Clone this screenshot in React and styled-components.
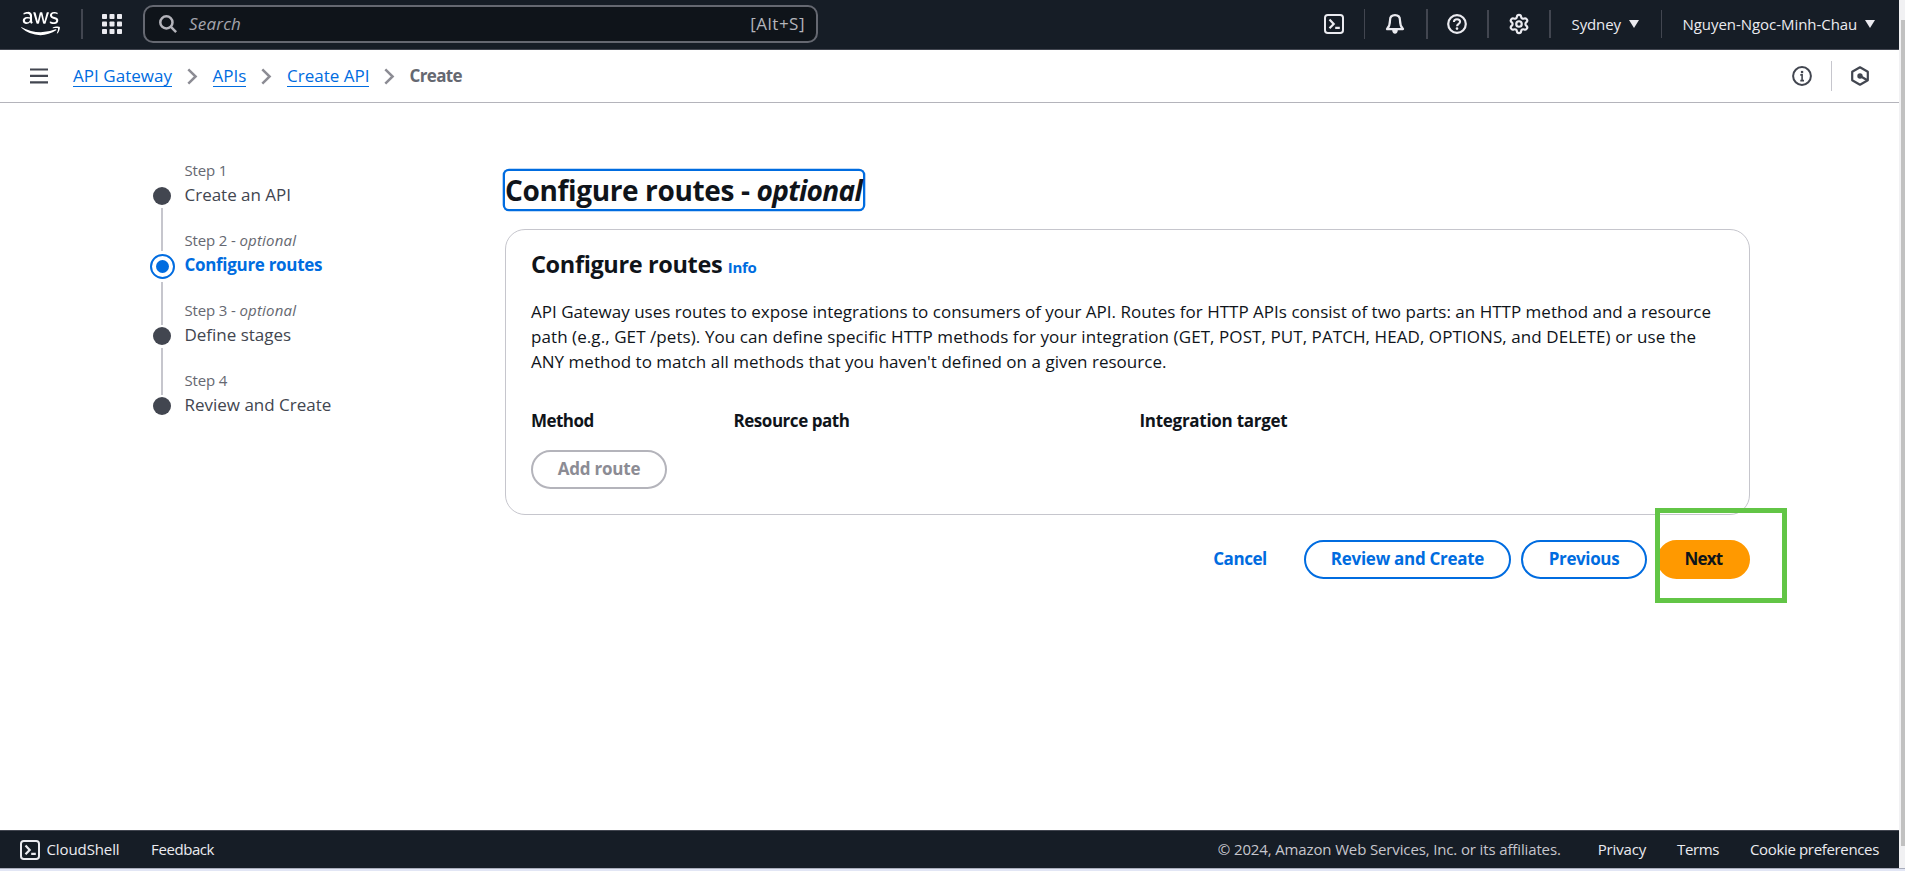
import React from "react";
import styled, { createGlobalStyle, css } from "styled-components";
import { FaAws } from "react-icons/fa";
import { Settings } from "lucide-react";

const GlobalStyle = createGlobalStyle`
  *, *::before, *::after { box-sizing: border-box; }
  body {
    margin: 0;
    overflow: hidden;
    background: #fff;
    color: #0f141a;
    font-family: "Open Sans", "Noto Sans", sans-serif;
    font-size: 17px;
  }
  h1, h2, p, ol, ul { margin: 0; padding: 0; }
  li { list-style: none; }
  svg { display: block; flex: none; }
`;

const Window = styled.div`
  display: flex;
  flex-direction: column;
  width: 1905px;
  height: 871px;
`;

const Viewport = styled.div`
  display: flex;
  flex: 1;
  min-height: 0;
`;

const Page = styled.div`
  display: flex;
  flex-direction: column;
  width: 1899px;
`;

const ScrollTrack = styled.div`
  width: 6px;
  padding: 20px 0 22px 2px;
  background: #f1f1f3;
`;

const ScrollThumb = styled.div`
  height: 100%;
  background: #c1c1c1;
`;

const WindowEdge = styled.div`
  height: 3px;
  border-top: 1px solid #a9adbb;
  background: #e2e6f5;
`;

const Label = styled.span`
  white-space: nowrap;
  letter-spacing: ${(p) => p.$track || 0}px;
`;

/* Top navigation */

const TopBar = styled.header`
  display: flex;
  align-items: flex-start;
  height: 50px;
  padding-left: 21px;
  border-bottom: 1px solid #424650;
  background: #161d26;
  color: #ebebf0;
`;

const LogoLink = styled.a`
  display: flex;
  width: 39px;
  margin: 8px 21px 0 0;
  color: #fff;

  svg { width: 39px; height: 31px; }
`;

const NavDivider = styled.i`
  width: ${(p) => (p.$thin ? 1 : 2)}px;
  height: ${(p) => (p.$short ? 28 : 30)}px;
  margin-top: ${(p) => (p.$short ? 10 : 9)}px;
  background: #424650;
`;

const NavButton = styled.a`
  display: flex;
  align-items: center;
  justify-content: center;
  width: ${(p) => p.$width}px;
  height: 48px;
  padding-right: ${(p) => p.$end || 0}px;
`;

const SearchBox = styled.div`
  display: flex;
  align-items: center;
  width: 675px;
  height: 38px;
  margin: 5px 506px 0 1px;
  padding: 0 11px 0 14px;
  border: 2px solid #656871;
  border-radius: 10px;
  background: #0f141a;
  color: #b4b4bb;
`;

const SearchText = styled.span`
  flex: 1;
  margin: -2px 0 0 12px;
  font-style: italic;
  color: #a4a4ad;
  letter-spacing: 0.2px;
`;

const Shortcut = styled.span`
  margin-top: -2px;
  letter-spacing: 0.5px;
`;

const NavMenu = styled.a`
  display: flex;
  align-items: center;
  gap: 8px;
  height: 48px;
  padding-left: 20.5px;
  width: ${(p) => p.$width}px;
  font-size: 15px;
  line-height: 20px;
`;

/* Breadcrumb row */

const CrumbBar = styled.nav`
  display: flex;
  align-items: center;
  height: 53px;
  padding: 0 30px;
  border-bottom: 1px solid #b4b4bb;
  color: #424650;
`;

const Crumbs = styled.ol`
  display: flex;
  align-items: center;
  flex: 1;
  margin-left: 25px;
`;

const Crumb = styled.li`
  display: flex;
  align-items: center;
  gap: 15px;
  width: ${(p) => p.$width}px;
`;

const CrumbLink = styled.a`
  height: 22px;
  line-height: 22px;
  border-bottom: 1px solid #006ce0;
  color: #006ce0;
  white-space: nowrap;
  letter-spacing: ${(p) => p.$track || 0}px;
`;

const CurrentCrumb = styled.span`
  line-height: 24px;
  font-weight: 700;
  color: #656871;
  letter-spacing: -0.65px;
`;

const BarDivider = styled.i`
  width: 1px;
  height: 30px;
  margin: 0 19px;
  background: #c6c6cd;
`;

/* Content */

const Content = styled.main`
  display: flex;
  flex: 1;
  padding: 57px 0 0 149px;
`;

const StepList = styled.ol`
  width: 356px;
`;

const Step = styled.li`
  display: flex;
  gap: 9.5px;
  height: 70px;
`;

const Rail = styled.div`
  display: flex;
  flex-direction: column;
  align-items: center;
  gap: 3px;
  width: 26px;
  padding-top: ${(p) => (p.$active ? 24 : 27)}px;
`;

const Dot = styled.i`
  flex: none;
  width: 18px;
  height: 18px;
  border-radius: 50%;
  background: #424650;
  ${(p) =>
    p.$active &&
    css`
      width: 25px;
      height: 25px;
      border: 2px solid #006ce0;
      padding: 4px;
      background: #006ce0 content-box;
    `}
`;

const Connector = styled.i`
  flex: none;
  width: 2px;
  height: ${(p) => p.$length}px;
  background: #c6c6cd;
`;

const StepText = styled.div`
  display: flex;
  flex-direction: column;
  gap: 2px;
`;

const StepNumber = styled.span`
  line-height: 20px;
  font-size: 15px;
  color: #656871;
  white-space: nowrap;
  letter-spacing: -0.15px;

  em { letter-spacing: 0.2px; }
`;

const StepTitle = styled.span`
  line-height: 25px;
  color: ${(p) => (p.$active ? "#006ce0" : "#424650")};
  font-weight: ${(p) => (p.$active ? 700 : 400)};
  letter-spacing: ${(p) => (p.$active ? -0.31 : -0.01)}px;
  white-space: nowrap;
`;

const Main = styled.section`
  width: 1245px;
  padding-top: 11px;
`;

const PageTitle = styled.h1`
  width: 358px;
  height: 38px;
  border-radius: 4px;
  box-shadow: 0 0 0 2.3px #006ce0;
  font-size: 28px;
  line-height: 39px;
  font-weight: 700;
  letter-spacing: -0.36px;
  white-space: nowrap;

  em { letter-spacing: -0.7px; }
`;

const Card = styled.section`
  height: 286px;
  margin-top: 20px;
  padding: 19px 25px;
  border: 1px solid #c6c6cd;
  border-radius: 20px;
`;

const CardHeader = styled.div`
  display: flex;
  align-items: baseline;
  gap: 5.5px;
`;

const CardTitle = styled.h2`
  font-size: 23.5px;
  line-height: 30px;
  letter-spacing: -0.36px;
`;

const InfoLink = styled.a`
  font-size: 15px;
  font-weight: 700;
  color: #006ce0;
  letter-spacing: -0.3px;
`;

const Description = styled.p`
  margin-top: 20px;
  line-height: 25px;
`;

const DescriptionLine = styled.span`
  display: block;
  white-space: nowrap;
  letter-spacing: ${(p) => p.$track}px;
`;

const Columns = styled.div`
  display: grid;
  grid-template-columns: 202.5px 406px 1fr;
  margin: 34px 0 17px;
  line-height: 25px;
  font-weight: 700;
`;

const Button = styled.button`
  width: ${(p) => p.$width}px;
  height: 39px;
  padding: 0 0 2px;
  border: 2px solid #006ce0;
  border-radius: 20px;
  background: #fff;
  color: #006ce0;
  font: 700 17px "Open Sans", "Noto Sans", sans-serif;
  letter-spacing: ${(p) => p.$track || 0}px;
  white-space: nowrap;

  ${(p) =>
    p.$kind === "disabled" &&
    css`
      border-color: #b4b4bb;
      color: #8c8c94;
    `}
  ${(p) =>
    p.$kind === "primary" &&
    css`
      border-color: #ff9900;
      background: #ff9900;
      color: #0f141a;
    `}
  ${(p) =>
    p.$kind === "link" &&
    css`
      margin-right: 17px;
      border-color: transparent;
    `}
`;

const Actions = styled.div`
  display: flex;
  justify-content: flex-end;
  gap: 10px;
  margin-top: 25px;
`;

const Highlighted = styled.div`
  position: relative;
  display: flex;

  &::after {
    content: "";
    position: absolute;
    left: -2px;
    top: -32px;
    width: 132px;
    height: 95px;
    border: 5px solid #62c546;
  }
`;

/* Footer */

const Footer = styled.footer`
  display: flex;
  align-items: center;
  height: 38px;
  padding: 0 20px;
  border-top: 1px solid #424650;
  background: #161d26;
  color: #ebebf0;
  font-size: 15px;
`;

const FooterLink = styled.a`
  display: flex;
  align-items: center;
  gap: 6.5px;
  margin-right: ${(p) => p.$after || 0}px;

  span { margin-top: -2px; }
`;

const Copyright = styled.span`
  flex: 1;
  margin: -2px 37px 0 0;
  text-align: right;
  white-space: nowrap;
  color: #c6c6cd;
  letter-spacing: -0.135px;
`;

const GridIcon = () => (
  <svg width="20" height="20" viewBox="0 0 20 20" fill="currentColor">
    {[0, 7.5, 15].map((y) =>
      [0, 7.5, 15].map((x) => <rect key={`${x}-${y}`} x={x} y={y} width="5" height="5" rx="0.8" />)
    )}
  </svg>
);

const SearchIcon = () => (
  <svg width="18" height="18" viewBox="0 0 18 18" fill="none" stroke="currentColor" strokeWidth="2.5">
    <circle cx="7.4" cy="7.4" r="6.1" />
    <path d="M11.7 11.7l5.4 5.4" />
  </svg>
);

const ShellIcon = () => (
  <svg width="20" height="20" viewBox="0 0 20 20" fill="none" stroke="currentColor" strokeWidth="2">
    <rect x="1" y="1" width="18" height="18" rx="2.8" />
    <path d="M5.5 5.6l4.2 4.3-4.2 4.4M11.2 13.9h4.6" strokeWidth="2.2" />
  </svg>
);

const BellIcon = () => (
  <svg width="20" height="20" viewBox="0 0 20 20" fill="none" stroke="currentColor" strokeWidth="2.2" strokeLinejoin="round">
    <path d="M10 1.2c-3.3 0-5 2.3-5 5.2 0 3.6-.8 6.3-3 8.7h16c-2.2-2.4-3-5.1-3-8.7 0-2.9-1.7-5.2-5-5.2z" />
    <path d="M7.2 16h5.6c0 2.4-1.2 3.7-2.8 3.7S7.2 18.4 7.2 16z" fill="currentColor" stroke="none" />
  </svg>
);

const HelpIcon = () => (
  <svg width="20" height="20" viewBox="0 0 20 20" fill="none" stroke="currentColor" strokeWidth="2.2">
    <circle cx="10" cy="10" r="8.8" />
    <path d="M6.9 8c0-1.7 1.3-2.8 3.1-2.8s3.1 1.1 3.1 2.6c0 2-3.1 2.1-3.1 4.5" strokeWidth="2" />
    <circle cx="10" cy="14.6" r="1.3" fill="currentColor" stroke="none" />
  </svg>
);

const CaretIcon = () => (
  <svg width="10" height="8" viewBox="0 0 10 8" fill="currentColor">
    <path d="M0 0h10L5 8z" />
  </svg>
);

const MenuIcon = () => (
  <svg width="18" height="16" viewBox="0 0 18 16" stroke="currentColor" strokeWidth="2.2">
    <path d="M0 1.5h18M0 7.9h18M0 14.3h18" />
  </svg>
);

const ChevronIcon = () => (
  <svg width="11" height="17" viewBox="0 0 11 17" fill="none" stroke="#8c8c94" strokeWidth="2.5">
    <path d="M1.3 1.3l7.3 7.2-7.3 7.2" />
  </svg>
);

const InfoIcon = () => (
  <svg width="20" height="20" viewBox="0 0 20 20" fill="none" stroke="currentColor" strokeWidth="2">
    <circle cx="10" cy="10" r="8.9" />
    <path d="M8.3 8.9h1.8v5.6M8.3 14.6h3.7" strokeWidth="1.6" />
    <rect x="8.9" y="4.9" width="2.3" height="2.3" fill="currentColor" stroke="none" />
  </svg>
);

const HexIcon = () => (
  <svg width="18" height="20" viewBox="0 0 18 20" fill="none" stroke="currentColor" strokeWidth="2.2" strokeLinejoin="round">
    <path d="M9 1.3l7.8 4.4v8.6L9 18.7l-7.8-4.4V5.7z" />
    <circle cx="9" cy="10" r="2.7" fill="currentColor" stroke="none" />
    <path d="M9 10l7 4" />
  </svg>
);

const steps = [
  { number: "Step 1", title: "Create an API", line: 43 },
  { number: "Step 2", title: "Configure routes", optional: true, active: true, line: 43 },
  { number: "Step 3", title: "Define stages", optional: true, line: 47 },
  { number: "Step 4", title: "Review and Create" },
];

export default function App() {
  return (
    <Window>
      <GlobalStyle />
      <Viewport>
        <Page>
          <TopBar>
            <LogoLink><FaAws /></LogoLink>
            <NavDivider />
            <NavButton $width={59} $end={1}><GridIcon /></NavButton>
            <SearchBox>
              <SearchIcon />
              <SearchText>Search</SearchText>
              <Shortcut>[Alt+S]</Shortcut>
            </SearchBox>
            <NavButton $width={40} $end={20}><ShellIcon /></NavButton>
            <NavDivider $thin />
            <NavButton $width={61} $end={1}><BellIcon /></NavButton>
            <NavDivider />
            <NavButton $width={59} $end={1}><HelpIcon /></NavButton>
            <NavDivider $short />
            <NavButton $width={60}><Settings size={22} strokeWidth={2.4} /></NavButton>
            <NavDivider $short />
            <NavMenu $width={110}>
              <Label $track={-0.1}>Sydney</Label>
              <CaretIcon />
            </NavMenu>
            <NavDivider $short $thin />
            <NavMenu $width={220}>
              <Label $track={-0.05}>Nguyen-Ngoc-Minh-Chau</Label>
              <CaretIcon />
            </NavMenu>
          </TopBar>

          <CrumbBar>
            <MenuIcon />
            <Crumbs>
              <Crumb $width={139.5}><CrumbLink $track={0.03}>API Gateway</CrumbLink><ChevronIcon /></Crumb>
              <Crumb $width={74.5}><CrumbLink>APIs</CrumbLink><ChevronIcon /></Crumb>
              <Crumb $width={122.5}><CrumbLink>Create API</CrumbLink><ChevronIcon /></Crumb>
              <Crumb><CurrentCrumb>Create</CurrentCrumb></Crumb>
            </Crumbs>
            <InfoIcon />
            <BarDivider />
            <HexIcon />
          </CrumbBar>

          <Content>
            <StepList>
              {steps.map((s) => (
                <Step key={s.number}>
                  <Rail $active={s.active}>
                    <Dot $active={s.active} />
                    {s.line && <Connector $length={s.line} />}
                  </Rail>
                  <StepText>
                    <StepNumber>
                      {s.number}
                      {s.optional && <> - <em>optional</em></>}
                    </StepNumber>
                    <StepTitle $active={s.active}>{s.title}</StepTitle>
                  </StepText>
                </Step>
              ))}
            </StepList>

            <Main>
              <PageTitle>Configure routes - <em>optional</em></PageTitle>
              <Card>
                <CardHeader>
                  <CardTitle>Configure routes</CardTitle>
                  <InfoLink>Info</InfoLink>
                </CardHeader>
                <Description>
                  <DescriptionLine $track={0.007}>
                    API Gateway uses routes to expose integrations to consumers of your API. Routes for HTTP APIs consist of two parts: an HTTP method and a resource
                  </DescriptionLine>
                  <DescriptionLine $track={0.074}>
                    path (e.g., GET /pets). You can define specific HTTP methods for your integration (GET, POST, PUT, PATCH, HEAD, OPTIONS, and DELETE) or use the
                  </DescriptionLine>
                  <DescriptionLine $track={0.026}>
                    ANY method to match all methods that you haven't defined on a given resource.
                  </DescriptionLine>
                </Description>
                <Columns>
                  <Label $track={-0.55}>Method</Label>
                  <Label $track={-0.46}>Resource path</Label>
                  <Label $track={-0.28}>Integration target</Label>
                </Columns>
                <Button $kind="disabled" $width={136} $track={-0.22} disabled>Add route</Button>
              </Card>
              <Actions>
                <Button $kind="link" $width={74} $track={-0.42}>Cancel</Button>
                <Button $width={207} $track={-0.28}>Review and Create</Button>
                <Button $width={126} $track={-0.36}>Previous</Button>
                <Highlighted>
                  <Button $kind="primary" $width={93} $track={-0.8}>Next</Button>
                </Highlighted>
              </Actions>
            </Main>
          </Content>

          <Footer>
            <FooterLink $after={31.5}><ShellIcon /><Label $track={-0.1}>CloudShell</Label></FooterLink>
            <FooterLink><Label $track={-0.42}>Feedback</Label></FooterLink>
            <Copyright>© 2024, Amazon Web Services, Inc. or its affiliates.</Copyright>
            <FooterLink $after={31}><Label $track={-0.16}>Privacy</Label></FooterLink>
            <FooterLink $after={31}><Label $track={-0.4}>Terms</Label></FooterLink>
            <FooterLink><Label $track={-0.34}>Cookie preferences</Label></FooterLink>
          </Footer>
        </Page>
        <ScrollTrack><ScrollThumb /></ScrollTrack>
      </Viewport>
      <WindowEdge />
    </Window>
  );
}
